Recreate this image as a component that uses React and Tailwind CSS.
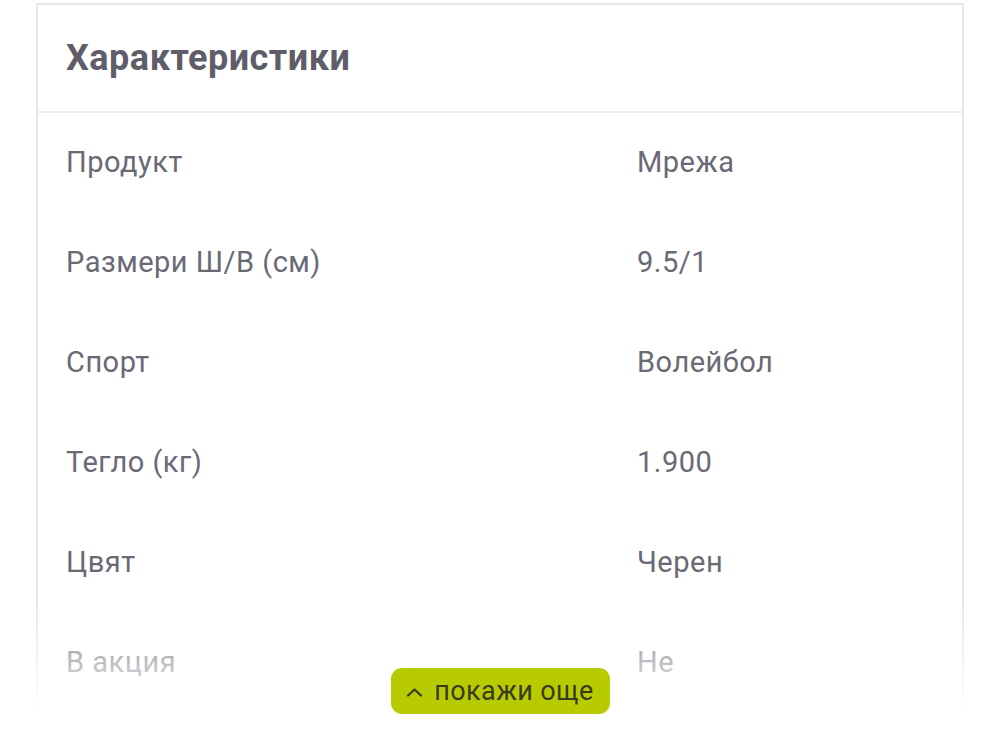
const specs = [
  { label: "Продукт", value: "Мрежа" },
  { label: "Размери Ш/В (см)", value: "9.5/1" },
  { label: "Спорт", value: "Волейбол" },
  { label: "Тегло (кг)", value: "1.900" },
  { label: "Цвят", value: "Черен" },
  { label: "В акция", value: "Не" },
];

export default function App() {
  return (
    <div
      className="min-h-[742px] bg-white px-[36px] pt-[3px]"
      style={{ fontFamily: "Roboto, 'Noto Sans', sans-serif" }}>
      <div className="relative h-[712px] overflow-hidden">
        <section className="border-2 border-[#e6e6e8] bg-white">
          {/* Header */}
          <div className="flex h-[108px] items-center border-b-2 border-[#ececee] px-[28px]">
            <h2 className="text-[36px] font-bold leading-none tracking-[0.5px] text-[#5e5d69]">
              Характеристики
            </h2>
          </div>

          {/* Spec rows */}
          {specs.map((row) => (
            <div
              key={row.label}
              className="grid h-[100px] grid-cols-[571px_1fr] items-center px-[28px] text-[29px] tracking-[0.5px] text-[#6a6975]">
              <span>{row.label}</span>
              <span>{row.value}</span>
            </div>
          ))}
        </section>

        {/* Fade */}
        <div className="pointer-events-none absolute inset-x-0 bottom-0 h-[120px] bg-gradient-to-b from-white/0 to-white" />

        {/* Show more */}
        <div className="absolute inset-x-0 bottom-[1px] flex justify-center">
          <button className="flex h-[46px] w-[219px] items-center justify-center gap-[11px] rounded-[11px] bg-[#b8cb01] text-[27px] tracking-[0.4px] text-[#3b3a1f]">
            <svg width="17" height="9" viewBox="0 0 17 9" fill="none" className="mt-[2px]">
              <polyline
                points="2,7.5 8.5,1.5 15,7.5"
                stroke="currentColor"
                strokeWidth="2.2"
                strokeLinecap="round"
                strokeLinejoin="round"
              />
            </svg>
            <span className="leading-none">покажи още</span>
          </button>
        </div>
      </div>
    </div>
  );
}
